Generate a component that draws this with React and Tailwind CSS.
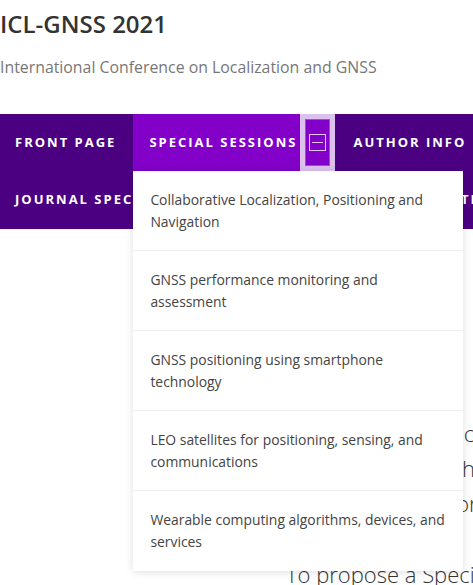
import React from 'react';

const sessions = [
  'Collaborative Localization, Positioning and Navigation',
  'GNSS performance monitoring and assessment',
  'GNSS positioning using smartphone technology',
  'LEO satellites for positioning, sensing, and communications',
  'Wearable computing algorithms, devices, and services',
];

function NavLink({ children, className = '' }) {
  return (
    <a
      href="#"
      className={`flex h-full items-center whitespace-nowrap text-[13px] font-bold uppercase tracking-[2px] text-white ${className}`}
    >
      {children}
    </a>
  );
}

export default function App() {
  return (
    <div className="relative h-[585px] w-[473px] overflow-hidden bg-white font-['Open_Sans',sans-serif]">
      {/* Site header */}
      <header className="pt-[9px]">
        <h1 className="whitespace-nowrap text-[24px] font-semibold leading-[30px] text-[#333]">
          ICL-GNSS 2021
        </h1>
        <p className="mt-[16px] whitespace-nowrap text-[15.85px] leading-[24px] text-[#777]">
          International Conference on Localization and GNSS
        </p>
      </header>

      {/* Main navigation */}
      <nav className="relative z-10 mt-[35px] bg-[#4b0082]">
        <div className="flex h-[57px] w-max items-stretch">
          <NavLink className="pl-[15px] pr-[17px]">Front Page</NavLink>
          <div className="relative flex items-stretch">
            <NavLink className="bg-[#8200c8] pl-[16px] pr-[3px]">Special Sessions</NavLink>
            <div className="flex w-[35px] items-stretch bg-[#dcc0ee] p-[5px]">
              <button className="flex flex-1 items-center justify-center border border-[#a845e0] bg-[#8200c8]">
                <span className="flex h-[17px] w-[17px] items-center justify-center border-[1.5px] border-[#e2c6f4]">
                  <span className="h-[1.5px] w-[11px] bg-[#e2c6f4]" />
                </span>
              </button>
            </div>

            {/* Open sub-menu */}
            <ul className="absolute left-0 top-[57px] w-[330px] bg-white shadow-[0_1px_8px_rgba(0,0,0,0.13)]">
              {sessions.map((s, i) => (
                <li
                  key={s}
                  className={`flex h-[80px] items-center pl-[17px] pr-[15px] text-[13.9px] leading-[22px] text-[#444] ${
                    i < sessions.length - 1 ? 'border-b border-[#eee]' : ''
                  }`}
                >
                  {s}
                </li>
              ))}
            </ul>
          </div>
          <NavLink className="pl-[18px] pr-[18px]">Author Info</NavLink>
        </div>
        <div className="flex h-[58px] w-max items-stretch">
          <NavLink className="pl-[15px] pr-[18px]">Journal Special Issue</NavLink>
          <NavLink className="pl-[18px] pr-[14px]">Registration</NavLink>
          <NavLink className="pl-[18px] pr-[18px]">Templates</NavLink>
        </div>
      </nav>

      {/* Page content */}
      <main className="pl-[286px] pt-[187px] text-[22px] font-light leading-[35px] text-[#333]">
        <p className="whitespace-nowrap">
          Special topics are covered in dedicated sessions
          <br />
          Proposals should have a clear focus
          <br />
          Each sessions is for organizers
        </p>
        <p className="mt-[36px] whitespace-nowrap">To propose a Special Session, please send</p>
      </main>
    </div>
  );
}
